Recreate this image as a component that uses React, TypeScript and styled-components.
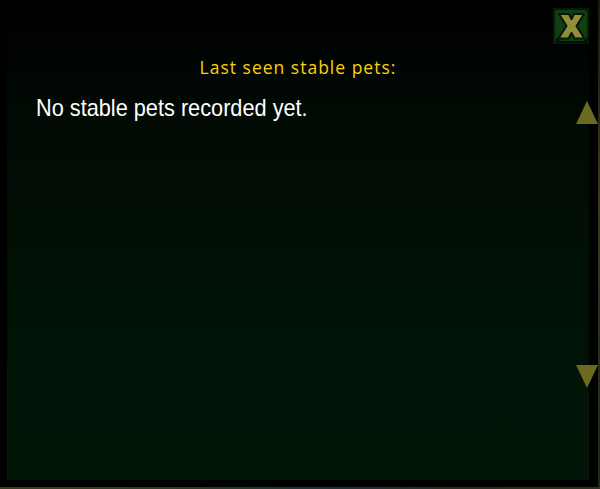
import styled, { createGlobalStyle } from "styled-components";

const GlobalStyle = createGlobalStyle`
  html, body {
    margin: 0;
    padding: 0;
    background: #000;
  }
  #root {
    width: 600px;
    height: 489px;
  }
`;

const Frame = styled.div`
  position: relative;
  width: 600px;
  height: 489px;
  box-sizing: border-box;
  padding: 0 11px 9px 7px;
  background: #000;
  overflow: hidden;
  display: flex;
`;

const WorldEdgeRight = styled.div`
  position: absolute;
  top: 0;
  right: 0;
  width: 2px;
  height: 100%;
  background: linear-gradient(#1a1a10, #3a3a22 40%, #2a3020 70%, #202818);
`;

const WorldEdgeBottom = styled.div`
  position: absolute;
  left: 0;
  bottom: 0;
  width: 100%;
  height: 2px;
  background: linear-gradient(90deg, #3a3a1a, #2a3a20 30%, #203038 55%, #2a2a1e 80%, #303020);
`;

const Panel = styled.div`
  flex: 1;
  display: flex;
  flex-direction: column;
  background: linear-gradient(#000 0%, #010a03 25%, #011206 60%, #021608 100%);
`;

const Title = styled.div`
  margin-top: 55px;
  text-align: center;
  font-family: "Open Sans", "DejaVu Sans", sans-serif;
  font-size: 17.5px;
  letter-spacing: 1px;
  color: #ffd100;
  line-height: 24px;
`;

const EmptyText = styled.div`
  margin: 15px 0 0 29px;
  font-family: "Liberation Sans", Arial, sans-serif;
  font-size: 24px;
  color: #fff;
  line-height: 28px;
  white-space: nowrap;
  transform: scaleX(0.905);
  transform-origin: left center;
`;

const CloseButton = styled.button`
  position: absolute;
  top: 8px;
  left: 553px;
  width: 36px;
  height: 36px;
  padding: 0;
  border: none;
  background: none;
  cursor: pointer;
`;

const Arrow = styled.button<{ $top: number }>`
  position: absolute;
  left: 575px;
  top: ${(p) => p.$top}px;
  width: 24px;
  height: 26px;
  padding: 0;
  border: none;
  background: none;
  cursor: pointer;
`;

function CloseIcon() {
  return (
    <svg width="36" height="36" viewBox="0 0 36 36">
      <rect x="0" y="0" width="36" height="36" fill="#051d05" />
      <rect x="2" y="2" width="32" height="31" rx="3" fill="#0f3f10" />
      <path d="M4 30 Q4 34 8 34 L30 34 Q34 34 34 30" fill="none" stroke="#021002" strokeWidth="2" />
      <path
        d="M6 6 H16 L18.5 11 L21 6 H31 L23.5 18 L31.5 30.5 H21.5 L18.5 25 L15.5 30.5 H5.5 L13.5 18 Z"
        fill="#8f8f3a"
        stroke="#0a140a"
        strokeWidth="2"
        strokeLinejoin="round"
      />
    </svg>
  );
}

function UpArrow() {
  return (
    <svg width="24" height="26" viewBox="0 0 24 26">
      <polygon points="12,1 23,24 1,24" fill="#6b6a22" />
    </svg>
  );
}

function DownArrow() {
  return (
    <svg width="24" height="26" viewBox="0 0 24 26">
      <polygon points="2,3 24,3 13,26" fill="#000" opacity="0.8" />
      <polygon points="1,1 23,1 12,24" fill="#6b6a22" />
    </svg>
  );
}

export default function App() {
  return (
    <>
      <GlobalStyle />
      <Frame>
        <Panel>
          <Title>Last seen stable pets:</Title>
          <EmptyText>No stable pets recorded yet.</EmptyText>
        </Panel>
        <CloseButton aria-label="Close">
          <CloseIcon />
        </CloseButton>
        <Arrow $top={100} aria-label="Scroll up">
          <UpArrow />
        </Arrow>
        <Arrow $top={364} aria-label="Scroll down">
          <DownArrow />
        </Arrow>
        <WorldEdgeRight />
        <WorldEdgeBottom />
      </Frame>
    </>
  );
}
